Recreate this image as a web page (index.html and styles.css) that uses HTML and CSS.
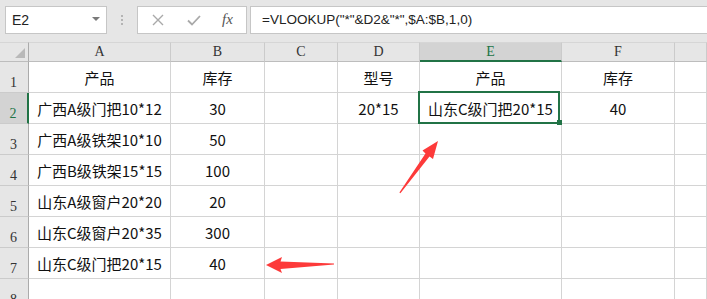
FILE: index.html
```html
<!DOCTYPE html>
<html lang="zh-CN">
<head>
    <meta charset="UTF-8">
    <title>VLOOKUP 模糊查找</title>
    <link rel="stylesheet" href="styles.css">
</head>
<body>
<div class="topbar">
    <div class="namebox"><span>E2</span><span class="caret"></span></div>
    <div class="grip"><i></i><i></i><i></i></div>
    <div class="fxbtns">
        <svg width="12" height="12" viewBox="0 0 12 12"><path d="M1 1L11 11M11 1L1 11" stroke="#a9a9a9" stroke-width="1.4" fill="none"/></svg>
        <svg width="14" height="11" viewBox="0 0 14 11"><path d="M1 5.5L5 9.5L13 1" stroke="#a9a9a9" stroke-width="1.8" fill="none"/></svg>
        <span class="fx">fx</span>
    </div>
    <div class="formula">=VLOOKUP("*"&amp;D2&amp;"*",$A:$B,1,0)</div>
</div>

<div class="sheet">
    <div class="corner"><span></span></div>
    <div class="colhead">A</div>
    <div class="colhead">B</div>
    <div class="colhead">C</div>
    <div class="colhead">D</div>
    <div class="colhead active">E</div>
    <div class="colhead">F</div>
    <div class="colhead"></div>

    <div class="rowhead">1</div>
    <div class="c">产品</div><div class="c">库存</div><div class="c"></div>
    <div class="c">型号</div><div class="c">产品</div><div class="c">库存</div><div class="c"></div>

    <div class="rowhead active">2</div>
    <div class="c">广西A级门把10*12</div><div class="c">30</div><div class="c"></div>
    <div class="c">20*15</div><div class="c sel">山东C级门把20*15</div><div class="c">40</div><div class="c"></div>

    <div class="rowhead">3</div>
    <div class="c">广西A级铁架10*10</div><div class="c">50</div><div class="c"></div>
    <div class="c"></div><div class="c"></div><div class="c"></div><div class="c"></div>

    <div class="rowhead">4</div>
    <div class="c">广西B级铁架15*15</div><div class="c">100</div><div class="c"></div>
    <div class="c"></div><div class="c"></div><div class="c"></div><div class="c"></div>

    <div class="rowhead">5</div>
    <div class="c">山东A级窗户20*20</div><div class="c">20</div><div class="c"></div>
    <div class="c"></div><div class="c"></div><div class="c"></div><div class="c"></div>

    <div class="rowhead">6</div>
    <div class="c">山东C级窗户20*35</div><div class="c">300</div><div class="c"></div>
    <div class="c"></div><div class="c"></div><div class="c"></div><div class="c"></div>

    <div class="rowhead">7</div>
    <div class="c">山东C级门把20*15</div><div class="c">40</div><div class="c"></div>
    <div class="c"></div><div class="c"></div><div class="c"></div><div class="c"></div>

    <div class="rowhead">8</div>
    <div class="c"></div><div class="c"></div><div class="c"></div>
    <div class="c"></div><div class="c"></div><div class="c"></div><div class="c"></div>
</div>

<!-- 标注箭头 -->
<svg class="marks" width="707" height="299" viewBox="0 0 707 299">
    <polygon fill="#fd3a3a" points="438,141 433,159 429.5,156.5 400.4,193.3 399.4,192.6 425.5,153.5 422.5,150.5"/>
    <polygon fill="#fd3a3a" points="266,265 282,257 280.5,261.5 334,263.6 334,264.6 280.5,269 282,273"/>
</svg>
</body>
</html>
```

FILE: styles.css
```css
*{
    margin:0;
    padding:0;
    box-sizing:border-box;
}
body{
    width:707px;
    height:299px;
    overflow:hidden;
    position:relative;
    background:#fff;
    font-family:"Noto Sans CJK SC", sans-serif;
}

/* 编辑栏 */
.topbar{
    height:42px;
    background:#e6e6e6;
    display:flex;
    align-items:flex-start;
    padding:6px 0 0 5px;
}
.namebox,
.fxbtns,
.formula{
    height:28px;
    background:#fff;
    border:1px solid #c6c6c6;
}
.namebox{
    width:102px;
    display:flex;
    align-items:center;
    justify-content:space-between;
    padding:0 6px 0 6px;
    font:14px "Liberation Sans", sans-serif;
    color:#222;
}
.caret{
    width:0;
    height:0;
    border-left:4px solid transparent;
    border-right:4px solid transparent;
    border-top:4px solid #7a7a7a;
    margin-top:-2px;
}
.grip{
    width:30px;
    height:28px;
    display:flex;
    flex-direction:column;
    align-items:center;
    justify-content:center;
    gap:2px;
}
.grip i{
    width:2px;
    height:2px;
    background:#b4b4b4;
}
.fxbtns{
    width:110px;
    display:flex;
    align-items:center;
    padding:0 0 0 14px;
}
.fxbtns svg{
    margin-right:23px;
}
.fxbtns svg + svg{
    margin-right:21px;
}
.fx{
    font:italic 15px "Liberation Serif", serif;
    color:#555;
    margin-top:-2px;
}
.formula{
    flex:1;
    margin:0 -30px 0 3px;
    padding:0 0 0 11px;
    font:13.5px "Liberation Sans", sans-serif;
    line-height:26px;
    color:#222;
}

/* 表格 */
.sheet{
    display:grid;
    grid-template-columns:29px 142px 94px 73px 82px 142px 113px 1fr;
    grid-template-rows:20px repeat(8, 31px);
}
.corner,
.colhead{
    background:#e6e6e6;
    border-top:1px solid #d6d6d6;
    border-bottom:1px solid #bdbdbd;
}
.corner{
    border-right:1px solid #ababab;
    display:flex;
    justify-content:flex-end;
    align-items:flex-end;
    padding:0 3px 3px 0;
}
.corner span{
    width:10px;
    height:10px;
    background:#b9b9b9;
    clip-path:polygon(100% 0, 100% 100%, 0 100%);
}
.colhead{
    border-right:1px solid #cbcbcb;
    text-align:center;
    font:14px "Liberation Serif", serif;
    line-height:18px;
    color:#333;
}
.colhead.active{
    background:#d3d3d3;
    border-bottom:2px solid #217346;
    color:#217346;
}
.rowhead{
    background:#e6e6e6;
    border-right:1px solid #ababab;
    border-bottom:1px solid #cbcbcb;
    display:flex;
    justify-content:center;
    align-items:flex-end;
    font:14px "Liberation Serif", serif;
    line-height:16px;
    padding:0 1px 1px 0;
    color:#333;
}
.rowhead.active{
    background:#d3d3d3;
    border-right:2px solid #217346;
    color:#217346;
}
.c{
    border-right:1px solid #d4d4d4;
    border-bottom:1px solid #d4d4d4;
    display:flex;
    align-items:center;
    justify-content:center;
    font-size:15px;
    color:#111;
    white-space:nowrap;
    padding-top:1px;
}
.c.sel{
    position:relative;
}
.c.sel::after{
    content:"";
    position:absolute;
    left:-2px;
    right:1px;
    top:-2px;
    bottom:-1px;
    border:2px solid #217346;
}
.c.sel::before{
    content:"";
    position:absolute;
    right:-1px;
    bottom:-2px;
    width:5px;
    height:5px;
    background:#217346;
    z-index:1;
}

/* 箭头 */
.marks{
    position:absolute;
    left:0;
    top:0;
    pointer-events:none;
}
```
